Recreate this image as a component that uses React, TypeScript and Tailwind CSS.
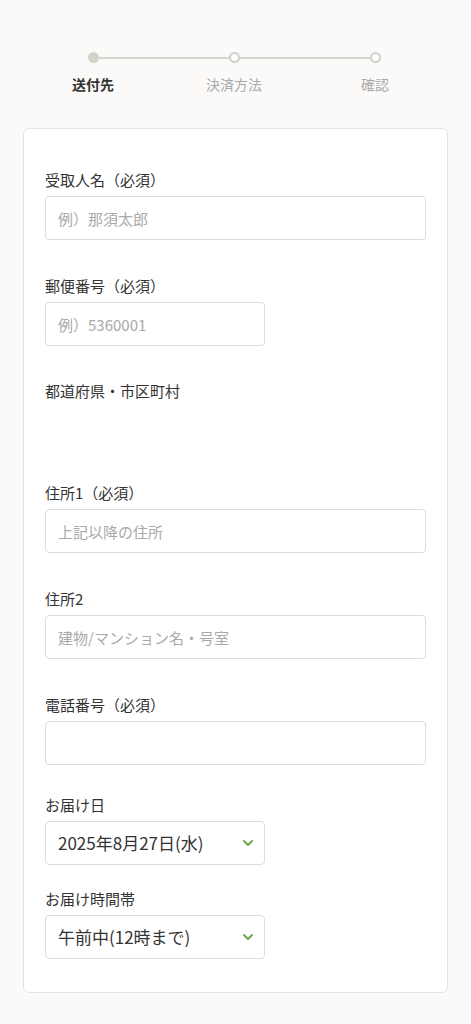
import { ChevronDown } from 'lucide-react';

const font = { fontFamily: '"Noto Sans CJK JP", "Noto Sans", sans-serif' };

const Label = ({ children }: { children: React.ReactNode }) => (
    <div className="text-[15px] leading-[22px] text-[#333] mb-[5px]">{children}</div>
);

const Input = ({ placeholder, narrow }: { placeholder?: string; narrow?: boolean }) => (
    <input
        placeholder={placeholder}
        className={`${narrow ? 'w-[220px]' : 'w-full'} h-[44px] border border-[#dcdcdc] rounded-[4px] bg-white px-[12px] text-[15px] text-[#333] placeholder:text-[#a9a9a9] outline-none`}
    />
);

const Select = ({ value }: { value: string }) => (
    <div className="w-[220px] h-[44px] border border-[#dcdcdc] rounded-[4px] bg-white pl-[12px] pr-[8px] flex items-center justify-between">
        <span className="text-[17px] text-[#333]">{value}</span>
        <ChevronDown className="w-[16px] h-[16px] text-[#6aa84f]" strokeWidth={3} />
    </div>
);

export default function App() {
    return (
        <div className="min-h-[1024px] bg-[#fbfaf8] pt-[52px]" style={font}>
            {/* stepper */}
            <div className="ml-[88px] w-[293px] flex items-center">
                <div className="w-[11px] h-[11px] rounded-full bg-[#cfd6c8]" />
                <div className="flex-1 h-[2px] bg-[#d6d6d0]" />
                <div className="w-[11px] h-[11px] rounded-full border-2 border-[#cfcfcb] bg-white" />
                <div className="flex-1 h-[2px] bg-[#d6d6d0]" />
                <div className="w-[11px] h-[11px] rounded-full border-2 border-[#cfcfcb] bg-white" />
            </div>
            <div className="ml-[53px] mt-[10px] flex gap-[61px] text-[14px] leading-[22px]">
                <div className="w-[80px] text-center font-bold text-[#333]">送付先</div>
                <div className="w-[80px] text-center text-[#aaa]">決済方法</div>
                <div className="w-[80px] text-center text-[#aaa]">確認</div>
            </div>

            {/* form card */}
            <div className="mx-[23px] mt-[33px] w-[425px] bg-white border border-[#e4e4e4] rounded-[6px] px-[21px] pt-[40px] pb-[33px]">
                <Label>受取人名（必須）</Label>
                <Input placeholder="例）那須太郎" />

                <div className="mt-[35px]">
                    <Label>郵便番号（必須）</Label>
                    <Input placeholder="例）5360001" narrow />
                </div>

                <div className="mt-[34px] h-[102px]">
                    <Label>都道府県・市区町村</Label>
                </div>

                <Label>住所1（必須）</Label>
                <Input placeholder="上記以降の住所" />

                <div className="mt-[35px]">
                    <Label>住所2</Label>
                    <Input placeholder="建物/マンション名・号室" />
                </div>

                <div className="mt-[35px]">
                    <Label>電話番号（必須）</Label>
                    <Input />
                </div>

                <div className="mt-[29px]">
                    <Label>お届け日</Label>
                    <Select value="2025年8月27日(水)" />
                </div>

                <div className="mt-[23px]">
                    <Label>お届け時間帯</Label>
                    <Select value="午前中(12時まで)" />
                </div>
            </div>
        </div>
    );
}
